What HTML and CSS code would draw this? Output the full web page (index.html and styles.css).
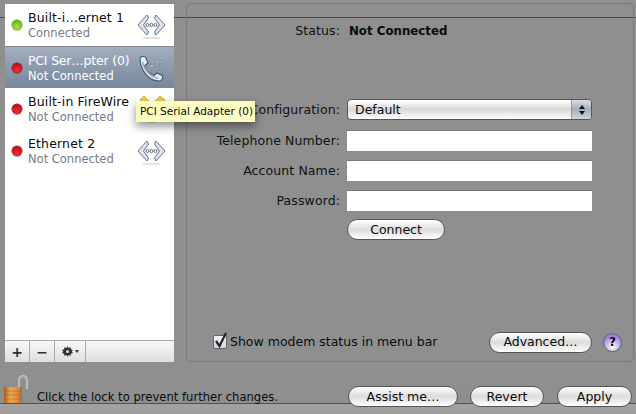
FILE: index.html
```html
<!DOCTYPE html>
<html lang="en">
<head>
<meta charset="utf-8">
<title>Network</title>
<link rel="stylesheet" href="styles.css">
</head>
<body>
<svg class="defs" width="0" height="0">
  <defs>
    <symbol id="eth" viewBox="0 0 30 28">
      <path d="M10 4 1 14 10 24 11.500 21 6.500 14 11.500 7ZM19 4 28 14 19 24 17.500 21 22.500 14 17.500 7Z" fill="#dfe3ea" stroke="#66748b" stroke-width="1"/>
      <circle cx="10.500" cy="14" r="1.500" fill="#fff" stroke="#5f6c82"/><circle cx="14.500" cy="14" r="1.500" fill="#fff" stroke="#5f6c82"/><circle cx="18.500" cy="14" r="1.500" fill="#fff" stroke="#5f6c82"/>
      <path d="M6 27h17" stroke="#888" stroke-width="2" opacity=".2"/>
    </symbol>
  </defs>
</svg>
<div class="window">
  <div class="topline"></div>
  <main class="main">
    <aside class="sidebar">
      <ul class="list">
        <li class="row">
          <span class="led green"></span>
          <div class="names"><div class="name">Built-i…ernet 1</div><div class="state">Connected</div></div>
          <svg class="svc"><use href="#eth"/></svg>
        </li>
        <li class="row selected">
          <span class="led red"></span>
          <div class="names"><div class="name tight">PCI Ser…pter (0)</div><div class="state">Not Connected</div></div>
          <svg class="svc" viewBox="0 0 30 28" fill="none">
            <path d="M3 4.500C3 2.500 8 1.500 9 4L11 9 7.500 12C9 16 13 20 17 21.500L20 19 25 21.500C27 23 25 27 22 27C12 27 3 16 3 4.500Z" fill="#e4e9f0" stroke="#46566c" stroke-width="1.100"/>
            <path d="M5.500 8C6.500 15 13 23 21 24.500" stroke="#9fadc0" stroke-width="1.500"/>
            <g fill="#e6ebf2" stroke="#4d5e73" stroke-width=".5"><circle cx="15" cy="12" r="1.300"/><circle cx="20" cy="8" r="1.300"/><circle cx="25" cy="4" r="1.300"/><circle cx="19" cy="15" r="1.100"/><circle cx="24" cy="11" r="1.100"/></g>
          </svg>
        </li>
        <li class="row">
          <span class="led red"></span>
          <div class="names"><div class="name">Built-in FireWire</div><div class="state">Not Connected</div></div>
          <svg class="svc" viewBox="0 0 30 28">
            <path d="M7 1 12 6 9 10 3 5ZM23 1 28 5 21 10 18 6Z" fill="#eed040" stroke="#b8961c" stroke-width=".6"/>
            <path d="M12 21h7v6h-7Z" fill="#eed040" stroke="#b8961c" stroke-width=".6"/>
          </svg>
        </li>
        <li class="row">
          <span class="led red"></span>
          <div class="names"><div class="name">Ethernet 2</div><div class="state">Not Connected</div></div>
          <svg class="svc"><use href="#eth"/></svg>
        </li>
      </ul>
      <div class="toolbar">
        <button class="tool">+</button>
        <button class="tool">−</button>
        <button class="tool gear"><svg width="11" height="11" viewBox="0 0 11 11"><path d="M5.500 0 6.500 2 8.700 1.200 8.900 3.200 11 4 9.700 5.500 11 7 8.900 7.800 8.700 9.800 6.500 9 5.500 11 4.500 9 2.300 9.800 2.100 7.800 0 7 1.300 5.500 0 4 2.100 3.200 2.300 1.200 4.500 2Z" fill="#333"/><circle cx="5.500" cy="5.500" r="1.500" fill="#ddd"/></svg><i class="caret"></i></button>
      </div>
    </aside>
    <section class="panel">
      <div class="status"><span class="label">Status:</span><b>Not Connected</b></div>
      <div class="form">
        <label class="label config">Configuration:</label>
        <div class="select"><span>Default</span><span class="stepper"><i class="up"></i><i class="down"></i></span></div>
        <label class="label">Telephone Number:</label><div class="field"></div>
        <label class="label">Account Name:</label><div class="field"></div>
        <label class="label">Password:</label><div class="field"></div>
        <span></span><div><button class="btn connect">Connect</button></div>
      </div>
      <div class="panel-foot">
        <label class="check"><span class="box"><svg class="tick" width="15" height="17" viewBox="0 0 15 17"><path d="M3 9 6.500 14 13 1" fill="none" stroke="#20242c" stroke-width="2.200"/></svg></span>Show modem status in menu bar</label>
        <button class="btn advanced">Advanced…</button>
        <span class="help">?</span>
      </div>
    </section>
  </main>
  <footer class="footer">
    <svg class="lock" width="26" height="30" viewBox="0 0 26 30">
      <defs><linearGradient id="brass" x1="0" x2="1" y1="0" y2="0"><stop offset="0" stop-color="#a85a18"/><stop offset=".35" stop-color="#f0a850"/><stop offset=".7" stop-color="#e09040"/><stop offset="1" stop-color="#b86a20"/></linearGradient></defs>
      <path d="M16 13V6c0-6.500 8-6.500 8 0v8" fill="none" stroke="#d4d4d4" stroke-width="2.200"/>
      <path d="M16 13V6c0-6.500 8-6.500 8 0v8" fill="none" stroke="#6a6a6a" stroke-width=".5"/>
      <rect x="1" y="12" width="18" height="16" fill="url(#brass)"/>
      <path d="M1 16h18M1 20h18M1 24h18" stroke="#8a5a20" stroke-width=".5" opacity=".7"/>
    </svg>
    <span class="locktext">Click the lock to prevent further changes.</span>
    <div class="actions">
      <button class="btn assist">Assist me…</button>
      <button class="btn revert">Revert</button>
      <button class="btn apply">Apply</button>
    </div>
  </footer>
</div>
<div class="tooltip">PCI Serial Adapter (0)</div>
</body>
</html>
```
FILE: styles.css
```css
* { box-sizing: border-box; }
html, body { margin: 0; padding: 0; }
body {
  width: 636px; height: 414px; overflow: hidden; position: relative;
  background: #8f8f8f; color: #0b0b0b;
  font: 13px/16px "Lucida Grande", "DejaVu Sans", sans-serif;
}
.defs { position: absolute; }
.window { height: 414px; display: flex; flex-direction: column; position: relative; }
.topline { position: absolute; left: 0; right: 0; top: 17px; height: 1px; background: #4a4a4a; }
.main { display: flex; padding: 3px 0 0 5px; height: 366px; position: relative; }
.sidebar { width: 169px; height: 358px; display: flex; flex-direction: column; background: #fff; margin-top: 1px; }
.list { list-style: none; margin: 0; padding: 0; flex: 1; }
.row { height: 42px; display: flex; align-items: center; position: relative; }
.row.selected { background: linear-gradient(#a3aebd, #76869c); border-top: 1px solid #7f8a99; color: #fff; }
.led { width: 10px; height: 10px; border-radius: 50%; margin: 0 6px 0 7px; flex: none; }
.led.green { background: radial-gradient(circle at 50% 70%, #a8e840, #4f9a10); box-shadow: 0 0 0 .5px #4a7a20; }
.led.red { background: radial-gradient(circle at 50% 70%, #f03030, #a80010); box-shadow: 0 0 0 .5px #800; }
.names { flex: 1; min-width: 0; padding-top: 2px; }
.name { font-size: 12.500px; line-height: 14px; white-space: nowrap; letter-spacing: .15px; }
.name.tight { letter-spacing: -.2px; }
.state { font-size: 11.500px; line-height: 16px; color: #767b84; white-space: nowrap; }
.selected .state { color: #fff; font-weight: 500; }
.svc { width: 30px; height: 28px; margin-right: 7px; flex: none; }
.toolbar { height: 22px; display: flex; background: linear-gradient(#f8f8f8, #dedede); border-top: 1px solid #aaa; }
.tool { width: 25px; padding: 0; border: 0; border-right: 1px solid #aaa; background: transparent; font: bold 14px/18px "DejaVu Sans", sans-serif; color: #333; }
.tool.gear { width: 31px; display: flex; align-items: center; justify-content: center; gap: 2px; }
.caret { width: 0; height: 0; border: 2.500px solid transparent; border-top: 3px solid #333; border-bottom: 0; }
.panel { position: relative; margin-left: 12px; width: 448px; height: 359px; border: 1px solid #7a7a7a; border-radius: 5px; display: flex; flex-direction: column; }
.label { text-align: right; color: #111; white-space: nowrap; font-size: 12.500px; letter-spacing: .1px; }
.status { display: grid; grid-template-columns: 153px auto; column-gap: 9px; margin-top: 19px; height: 16px; font-size: 12.500px; }
.status b { font-size: 11.800px; }
.form { display: grid; grid-template-columns: 153px 245px; column-gap: 7px; row-gap: 9px; margin-top: 60px; align-items: center; }
.select { height: 21px; margin-bottom: 1px; border-radius: 4px; background: linear-gradient(#fff, #d8d8d8 50%, #fff); border: 1px solid #555; padding-left: 7px; display: flex; justify-content: space-between; align-items: center; font-size: 12.500px; overflow: hidden; }
.config { margin-bottom: 1px; }
.stepper { width: 20px; height: 100%; background: linear-gradient(#d8dce3, #a6aebb 50%, #d0d6de); border-left: 1px solid #999; display: flex; flex-direction: column; align-items: center; justify-content: center; gap: 2px; }
.up { border: 3px solid transparent; border-bottom: 4px solid #111; border-top: 0; }
.down { border: 3px solid transparent; border-top: 4px solid #111; border-bottom: 0; }
.field { height: 21px; background: #fff; border-top: 1px solid #777; }
.btn { border: 1px solid #555; border-radius: 11px; background: linear-gradient(#fff, #dcdcdc 50%, #fff); font: 12.500px/16px "DejaVu Sans", sans-serif; color: #0b0b0b; padding: 0; height: 21px; }
.connect { width: 98px; margin-top: -1px; display: block; }
.panel-foot { position: absolute; left: 26px; top: 327px; right: 0; display: flex; align-items: center; height: 22px; }
.check { display: flex; align-items: center; gap: 3px; font-size: 12.500px; white-space: nowrap; width: 276px; }
.box { width: 14px; height: 14px; background: linear-gradient(#f4f4f4, #cfd6e0); border: 1px solid #666; border-radius: 2px; position: relative; }
.tick { position: absolute; left: -1px; top: -4px; }
.advanced { width: 103px; }
.help { width: 19px; height: 19px; border-radius: 50%; margin-left: 11px; background: radial-gradient(circle at 50% 75%, #fff, #9d7ce0 72%); border: 1px solid #666; font: bold 12px/17px "DejaVu Sans", sans-serif; text-align: center; }
.footer { height: 48px; display: flex; position: relative; background: linear-gradient(#8f8f8f 37px, #505050 37px, #505050 38px, #a2a2a2 38px, #9c9c9c); }
.lock { position: absolute; left: 3px; top: 9px; }
.locktext { position: absolute; left: 37px; top: 23px; font-size: 11.600px; white-space: nowrap; }
.actions { position: absolute; left: 348px; top: 20px; display: flex; gap: 12px; }
.assist { width: 110px; }
.revert { width: 74px; }
.apply { width: 75px; margin-left: 1px; }
.tooltip { position: absolute; left: 136px; top: 101px; width: 119px; height: 21px; background: #fdfdc2; font-size: 10.500px; line-height: 21px; padding-left: 4px; white-space: nowrap; box-shadow: 0 4px 10px rgba(0,0,0,.45); }
```
